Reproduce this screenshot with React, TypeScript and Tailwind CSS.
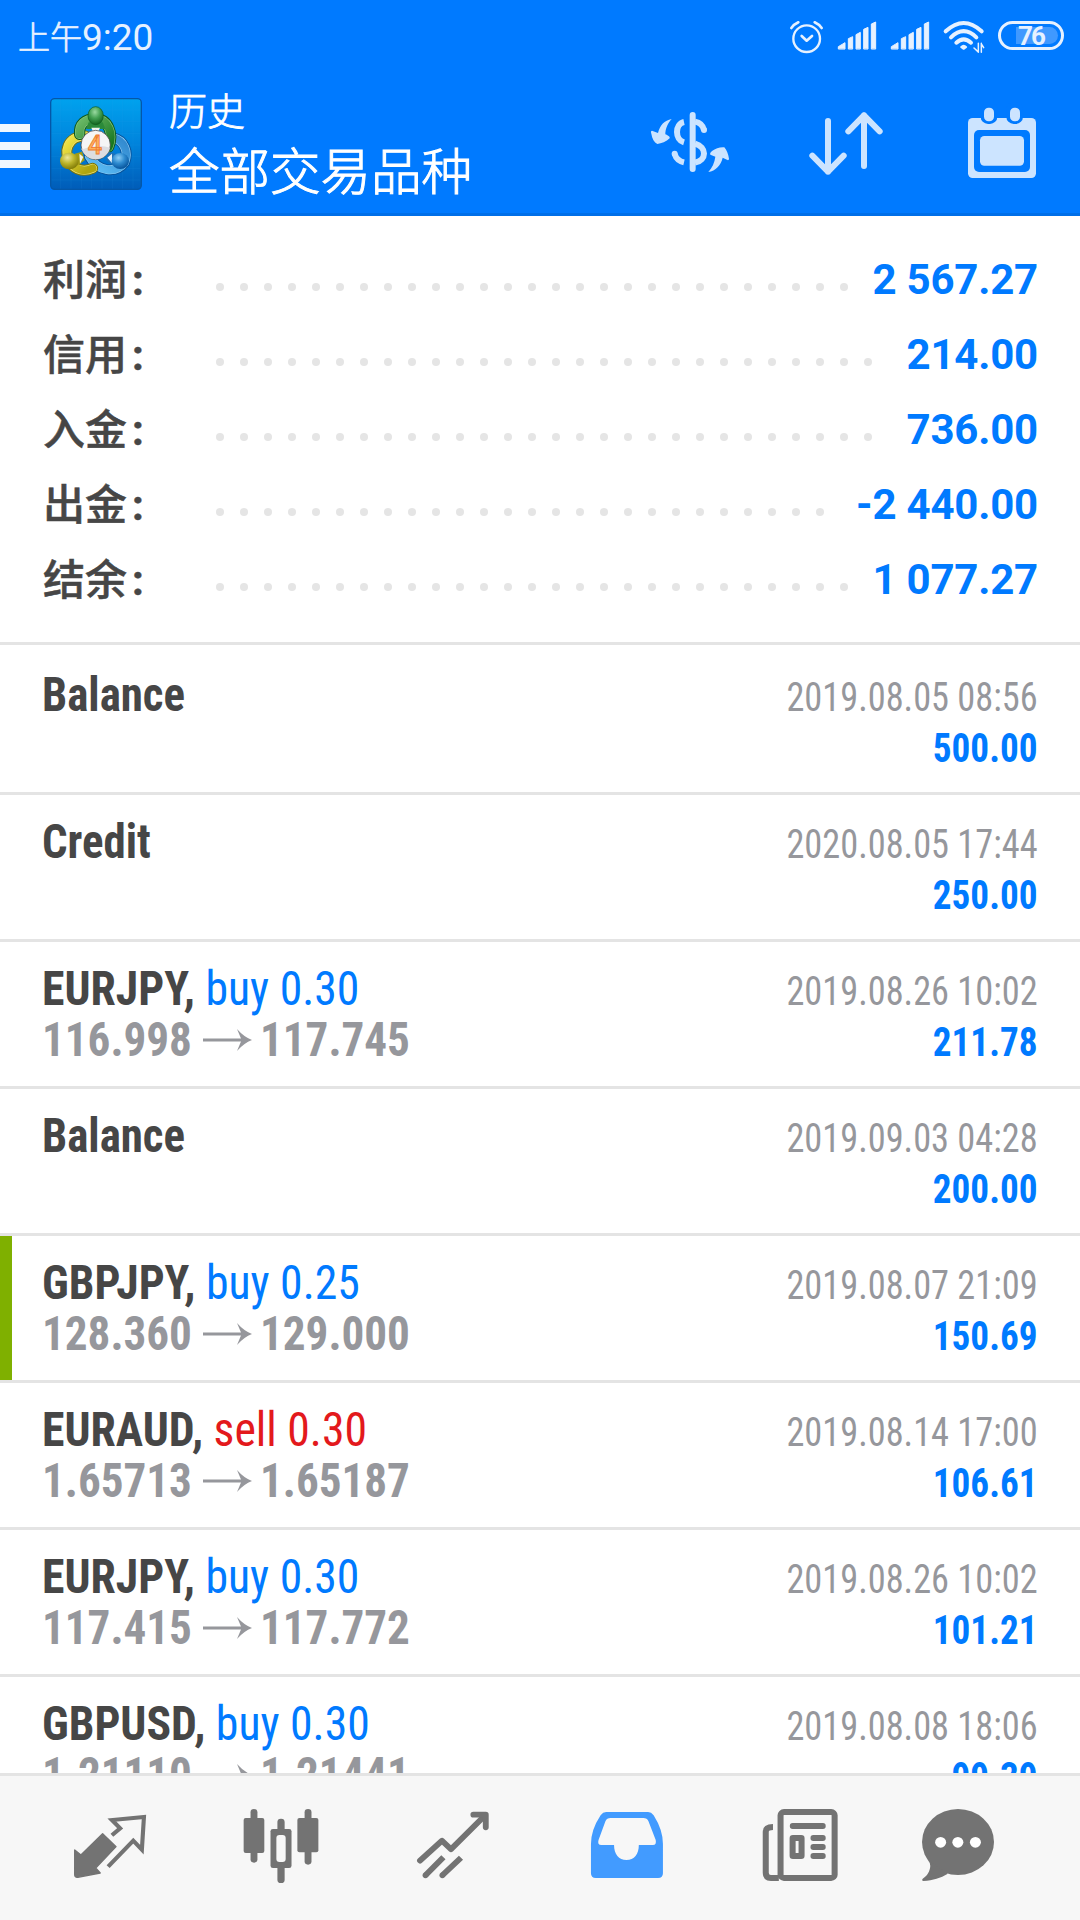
import type { ReactNode } from "react";

type Summary = { label: string; value: string; dots: number };
type Deal = {
  title: string;
  side?: "buy" | "sell";
  volume?: string;
  open?: string;
  close?: string;
  date: string;
  profit: string;
  marked?: boolean;
};

const summary: Summary[] = [
  { label: "利润", value: "2 567.27", dots: 27 },
  { label: "信用", value: "214.00", dots: 28 },
  { label: "入金", value: "736.00", dots: 28 },
  { label: "出金", value: "-2 440.00", dots: 26 },
  { label: "结余", value: "1 077.27", dots: 27 },
];

const deals: Deal[] = [
  { title: "Balance", date: "2019.08.05 08:56", profit: "500.00" },
  { title: "Credit", date: "2020.08.05 17:44", profit: "250.00" },
  { title: "EURJPY,", side: "buy", volume: "0.30", open: "116.998", close: "117.745", date: "2019.08.26 10:02", profit: "211.78" },
  { title: "Balance", date: "2019.09.03 04:28", profit: "200.00" },
  { title: "GBPJPY,", side: "buy", volume: "0.25", open: "128.360", close: "129.000", date: "2019.08.07 21:09", profit: "150.69", marked: true },
  { title: "EURAUD,", side: "sell", volume: "0.30", open: "1.65713", close: "1.65187", date: "2019.08.14 17:00", profit: "106.61" },
  { title: "EURJPY,", side: "buy", volume: "0.30", open: "117.415", close: "117.772", date: "2019.08.26 10:02", profit: "101.21" },
  { title: "GBPUSD,", side: "buy", volume: "0.30", open: "1.21110", close: "1.21441", date: "2019.08.08 18:06", profit: "99.39" },
];

function SignalBars({ x }: { x: number }) {
  return (
    <g transform={`translate(${x} 0)`} fill="#e6f1ff" stroke="#e6f1ff" strokeWidth="3" strokeLinejoin="round">
      <path d="M2 116V110L22 98V116Z" />
      <path d="M32 116V86L45 80V116Z" />
      <path d="M55 116V74L68 67V116Z" />
      <path d="M78 116V58L91 52V116Z" />
      <path d="M101 116V42L114 36V116Z" />
    </g>
  );
}

function StatusIcons() {
  return (
    <svg width="205" height="60" viewBox="255 0 615 180" fill="none" stroke="#e6f1ff" strokeLinecap="round" strokeLinejoin="round">
      <circle cx="320" cy="86" r="40" strokeWidth="7" />
      <path d="M305 78L320 92L336 78" strokeWidth="8" />
      <path d="M274 54Q282 43 295 37M344 37Q357 43 365 54" strokeWidth="8" />
      <SignalBars x={413} />
      <SignalBars x={572} />
      <path d="M737 64Q791 14 845 64" strokeWidth="12" />
      <path d="M753 82Q791 45 829 82" strokeWidth="12" />
      <path d="M769 98Q791 78 813 98" strokeWidth="12" />
      <path d="M783 111Q791 103 799 111L791 117Z" fill="#e6f1ff" strokeWidth="5" />
      <path d="M835 100V127M822 114L833 124M844 127V100M851 113L845 103" strokeWidth="4.5" />
    </svg>
  );
}

function AppLogo() {
  return (
    <svg width="140" height="120" viewBox="0 0 420 360" className="shrink-0">
      <defs>
        <linearGradient id="tile" x1="0" y1="0" x2="0" y2="1">
          <stop offset="0" stopColor="#00a2ee" />
          <stop offset="0.5" stopColor="#0083dc" />
          <stop offset="1" stopColor="#005cb8" />
        </linearGradient>
        <linearGradient id="greenRing" x1="0" y1="0" x2="1" y2="1">
          <stop offset="0" stopColor="#6dba68" />
          <stop offset="1" stopColor="#17761f" />
        </linearGradient>
        <linearGradient id="yellowRing" x1="0" y1="0" x2="0.8" y2="1">
          <stop offset="0" stopColor="#f6e94a" />
          <stop offset="1" stopColor="#b0a510" />
        </linearGradient>
        <linearGradient id="blueRing" x1="1" y1="0" x2="0" y2="1">
          <stop offset="0" stopColor="#2f86cc" />
          <stop offset="1" stopColor="#5fc0f8" />
        </linearGradient>
        <radialGradient id="greenHead" cx="0.45" cy="0.3" r="0.7">
          <stop offset="0" stopColor="#9ad9a0" />
          <stop offset="0.5" stopColor="#43a052" />
          <stop offset="1" stopColor="#12641f" />
        </radialGradient>
        <radialGradient id="yellowHead" cx="0.4" cy="0.3" r="0.7">
          <stop offset="0" stopColor="#eee79a" />
          <stop offset="0.5" stopColor="#bdb62c" />
          <stop offset="1" stopColor="#827c08" />
        </radialGradient>
        <radialGradient id="blueHead" cx="0.4" cy="0.3" r="0.7">
          <stop offset="0" stopColor="#8ccdf5" />
          <stop offset="0.5" stopColor="#2e8bd0" />
          <stop offset="1" stopColor="#07549c" />
        </radialGradient>
      </defs>
      <rect x="62" y="41" width="272" height="272" rx="12" fill="url(#tile)" stroke="#0457a8" strokeWidth="4" />
      <path d="M92 43V311M123 43V311M154 43V311M185 43V311M216 43V311M247 43V311M278 43V311M309 43V311M64 75H332M64 110H332M64 145H332M64 180H332M64 215H332M64 250H332M64 285H332" stroke="#35a5ee" strokeOpacity="0.15" strokeWidth="2" />
      <g fill="none" strokeLinecap="round">
        <path d="M248 158C284 166 296 202 284 232C258 266 204 262 178 214" stroke="#07549c" strokeWidth="33" />
        <path d="M248 158C284 166 296 202 284 232C258 266 204 262 178 214" stroke="#8fcdf5" strokeWidth="27" />
        <path d="M248 158C284 166 296 202 284 232C258 266 204 262 178 214" stroke="url(#blueRing)" strokeWidth="23" />
        <path d="M166 153C112 152 96 204 124 238C146 260 170 258 188 250" stroke="#7d7606" strokeWidth="33" />
        <path d="M166 153C112 152 96 204 124 238C146 260 170 258 188 250" stroke="#ece37a" strokeWidth="27" />
        <path d="M166 153C112 152 96 204 124 238C146 260 170 258 188 250" stroke="url(#yellowRing)" strokeWidth="23" />
        <path d="M149 148C146 118 164 102 197 102C234 102 252 146 236 186" stroke="#0d5a1c" strokeWidth="34" />
        <path d="M149 148C146 118 164 102 197 102C234 102 252 146 236 186" stroke="#83c47e" strokeWidth="28" />
        <path d="M149 148C146 118 164 102 197 102C234 102 252 146 236 186" stroke="url(#greenRing)" strokeWidth="24" />
      </g>
      <path d="M176 112H218L226 132H168Z" fill="#2b8a3a" />
      <path d="M184 128H210L204 142H190Z" fill="#f1f5ef" />
      <path d="M134 206L156 200L164 226L142 242Z" fill="#a39b12" />
      <path d="M256 206L236 200L228 226L250 242Z" fill="#1d70b8" />
      <path d="M148 206L160 216L150 236Z" fill="#f4f4e8" />
      <path d="M246 206L232 218L246 234Z" fill="#eaf3fa" />
      <ellipse cx="197" cy="92" rx="23" ry="27" fill="url(#greenHead)" stroke="#0d5a1c" strokeWidth="2" />
      <ellipse cx="118" cy="228" rx="28" ry="25" fill="url(#yellowHead)" />
      <ellipse cx="271" cy="228" rx="26" ry="24" fill="url(#blueHead)" />
      <circle cx="197" cy="180" r="44" fill="#f5f5f6" stroke="#3b3b3b" strokeOpacity="0.7" strokeWidth="3" />
      <path d="M154 188A44 44 0 0 0 240 188Q205 176 154 194Z" fill="#dcdde1" />
      <text x="195" y="207" textAnchor="middle" fontSize="76" fontWeight="500" fill="#ffb25c" stroke="#ee7a30" strokeWidth="2.5" className="font-['Roboto']">
        4
      </text>
    </svg>
  );
}

function CurrencyIcon() {
  return (
    <svg width="90" height="90" viewBox="15 0 270 270" fill="#cce4ff">
      <g fill="none" stroke="#cce4ff" strokeWidth="18">
        <path d="M132 66C104 72 104 119 132 127" />
        <path d="M104 162Q110 182 132 187" strokeLinecap="butt" />
        <path d="M158 45V207" strokeLinecap="round" />
        <path d="M165 65Q187 69 192 90" />
        <path d="M165 131C201 141 201 181 165 188" />
      </g>
      <circle cx="104" cy="161" r="9" />
      <circle cx="192" cy="90" r="9" />
      <path d="M95 57C73 61 60 76 54 99L36 92C31 93 33 97 34 101C36 116 43 127 52 132C64 131 79 125 89 115C90 111 88 108 76 103C76 86 84 68 95 57Z" />
      <path d="M205 216C216 204 224 188 226 170L211 164C209 160 212 157 216 153C227 145 239 141 253 142C260 149 265 163 267 176C267 180 264 182 261 179L248 173C243 195 227 213 205 216Z" />
    </svg>
  );
}

function SortIcon() {
  return (
    <svg width="90" height="90" viewBox="600 300 270 270" fill="none" stroke="#cce4ff" strokeWidth="18" strokeLinecap="round" strokeLinejoin="round">
      <path d="M684 363V515M637 467L684 515L731 467" />
      <path d="M792 498V346M745 394L792 346L839 394" />
    </svg>
  );
}

function CalendarIcon() {
  return (
    <svg width="90" height="90" viewBox="1080 300 270 270">
      <rect x="1104" y="354" width="204" height="180" rx="14" fill="#cce4ff" />
      <rect x="1122" y="390" width="168" height="126" rx="15" fill="#007aff" />
      <rect x="1140" y="408" width="132" height="89" rx="13" fill="#cce4ff" />
      <rect x="1142" y="306" width="50" height="66" rx="22" fill="#007aff" />
      <rect x="1219" y="306" width="50" height="66" rx="22" fill="#007aff" />
      <rect x="1152" y="323" width="30" height="41" rx="14" fill="#cce4ff" />
      <rect x="1230" y="323" width="30" height="41" rx="14" fill="#cce4ff" />
    </svg>
  );
}

function PriceArrow() {
  return (
    <svg width="49" height="24" viewBox="0 0 49 24" className="shrink-0">
      <path d="M0 10.5H38L34 1Q41 9 49 12Q41 15 34 23L38 13.5H0Z" fill="#96979c" />
    </svg>
  );
}

function NavIcon({ view, children }: { view: string; children: ReactNode }) {
  return (
    <svg width="80" height="84" viewBox={view} preserveAspectRatio="none" fill="none" strokeLinejoin="round">
      {children}
    </svg>
  );
}

function BottomNav() {
  return (
    <nav className="flex h-[147px] shrink-0 border-t-[3px] border-[#e4e4e4] bg-[#f7f7f7] pt-[30px] pl-[70px]">
      <NavIcon view="203.3 468 232.3 252">
        <path d="M217 600L235 615L298 551L337 590L278 654L291 669L226 682Q217 683 217 674Z" fill="#737373" stroke="#737373" strokeWidth="4" />
        <path d="M325 556L349 535L325 510L418 501L412 599L387 572L314 650" stroke="#737373" strokeWidth="12" strokeLinejoin="miter" />
      </NavIcon>
      <div className="ml-[91px]">
        <NavIcon view="701.3 468 232.3 252">
          <g fill="#737373">
            <rect x="729" y="477" width="20" height="161" rx="10" />
            <rect x="709" y="504" width="60" height="105" rx="6" />
            <rect x="807" y="506" width="21" height="193" rx="10" />
            <rect x="787" y="537" width="61" height="117" rx="7" />
            <rect x="886" y="477" width="20" height="167" rx="10" />
            <rect x="865" y="504" width="61" height="103" rx="6" />
          </g>
          <rect x="804" y="555" width="27" height="81" rx="9" fill="#f7f7f7" />
        </NavIcon>
      </div>
      <div className="ml-[92px]">
        <NavIcon view="1200.7 468 232.3 252">
          <g stroke="#737373" strokeWidth="17">
            <path d="M1221 632L1285 572L1311 598L1408 498" strokeLinecap="round" />
            <path d="M1376 494H1412V532" strokeLinecap="round" />
            <path d="M1237 676L1289 622M1286 676L1340 623" />
          </g>
          <circle cx="1237" cy="676" r="8.5" fill="#737373" />
          <circle cx="1286" cy="676" r="8.5" fill="#737373" />
        </NavIcon>
      </div>
      <div className="ml-[94px]">
        <NavIcon view="136.5 468 232.3 252">
          <path
            fill="#429bff"
            fillRule="evenodd"
            d="M192 486H314Q323 486 330 496Q357 540 357 582V670Q357 684 343 684H162Q148 684 148 670V582Q148 540 176 496Q183 486 192 486ZM205 504Q194 504 190 514L170 570Q166 585 178 585H215C215 612 229 630 251 630C274 630 287 612 287 585H328Q339 585 336 570L315 514Q311 504 300 504Z"
          />
        </NavIcon>
      </div>
      <div className="ml-[93px]">
        <NavIcon view="640.3 468 232.3 252">
          <g stroke="#737373" strokeWidth="17.5">
            <rect x="700" y="486" width="157" height="198" rx="10" />
            <path d="M678 531Q657 531 657 545V668Q657 684 672 684H695" />
            <rect x="735" y="564" width="26" height="54" rx="1" />
          </g>
          <g fill="#737373">
            <rect x="727" y="519" width="104" height="18" rx="8" />
            <rect x="787" y="555" width="44" height="18" rx="8" />
            <rect x="787" y="582" width="44" height="18" rx="8" />
            <rect x="787" y="609" width="44" height="18" rx="8" />
          </g>
        </NavIcon>
      </div>
      <div className="ml-[78px]">
        <NavIcon view="1097.3 468 232.3 252">
          <g fill="#737373">
            <ellipse cx="1213.5" cy="576" rx="104.5" ry="99" />
            <path d="M1126 630Q1133 638 1133 648C1132 664 1124 678 1111 686Q1107 691 1113 693C1142 691 1162 684 1184 671Z" />
          </g>
          <circle cx="1163" cy="577" r="16" fill="#fff" />
          <circle cx="1213" cy="577" r="16" fill="#fff" />
          <circle cx="1264" cy="577" r="16" fill="#fff" />
        </NavIcon>
      </div>
    </nav>
  );
}

function SummaryRow({ label, value, dots }: Summary) {
  return (
    <div className="flex h-[75px] items-center text-[42px] leading-[75px]">
      <div className="mt-px flex w-[173px] font-medium text-[#464646] [-webkit-text-stroke:0.5px_#464646]">
        <span>{label}</span>
        <span className="ml-[5px] font-['Roboto'] font-bold">:</span>
      </div>
      <div className="mt-[15px] flex gap-4">
        {Array.from({ length: dots }, (_, i) => (
          <i key={i} className="size-2 rounded-full bg-[#e5e5e5]" />
        ))}
      </div>
      <span className="ml-auto font-['Roboto'] font-bold tracking-[-0.2px] whitespace-pre text-[#007aff]">{value}</span>
    </div>
  );
}

function DealRow({ deal }: { deal: Deal }) {
  return (
    <div className="relative flex h-[147px] shrink-0 justify-between border-b-[3px] border-[#e4e4e4] pr-[42px] pl-[42px] font-['Roboto_Condensed']">
      {deal.marked && <div className="absolute inset-y-0 left-0 w-3 bg-[#7fb000]" />}
      <div className="pt-[21px] text-[48px] leading-[51px] whitespace-nowrap">
        {deal.side ? (
          <div className="origin-left scale-x-[0.952]">
            <span className="font-bold text-[#464646]">{deal.title}</span>
            {deal.side === "buy" && <span className="text-[#007aff]"> buy {deal.volume}</span>}
            {deal.side === "sell" && <span className="text-[#e3191c]"> sell {deal.volume}</span>}
          </div>
        ) : (
          <div className="origin-left scale-x-[0.935] font-bold text-[#464646]">{deal.title}</div>
        )}
        {deal.open && (
          <div className="flex items-center font-bold text-[#96979c]">
            <span className="w-[161px] origin-left scale-x-[0.94]">{deal.open}</span>
            <PriceArrow />
            <span className="ml-[8px] origin-left scale-x-[0.94]">{deal.close}</span>
          </div>
        )}
      </div>
      <div className="pt-6 text-right text-[40px] leading-[51px] whitespace-nowrap">
        <div className="origin-right scale-x-[0.908] text-[#96979c]">{deal.date}</div>
        <div className="origin-right scale-x-[0.93] font-bold text-[#007aff]">{deal.profit}</div>
      </div>
    </div>
  );
}

export default function App() {
  return (
    <div className="flex h-[1920px] w-[1080px] flex-col overflow-hidden bg-white font-['Roboto','Noto_Sans_CJK_SC',sans-serif]">
      <header className="flex h-[216px] shrink-0 flex-col border-b-[3px] border-[#006fe8] bg-[#007aff]">
        <div className="flex h-[74px] shrink-0 items-start pr-4 pl-[18px]">
          <div className="flex pt-[11px] leading-[54px] text-[#e6f1ff]">
            <span className="text-[32px] font-light [-webkit-text-stroke:0.7px_#e6f1ff]">上午</span>
            <span className="text-[37px] font-normal">9:20</span>
          </div>
          <div className="mt-[10px] ml-auto">
            <StatusIcons />
          </div>
          <div className="mt-[21px] ml-2 flex h-[29px] w-[66px] items-center rounded-full border-[3px] border-[#e6f1ff] pl-[15px]">
            <div className="flex h-[17px] w-[42px] items-center rounded-l-[3px] rounded-r-full bg-[#4099ff] pl-[2px] text-[26px] leading-none font-bold tracking-[-2px] text-[#e6f1ff]">
              76
            </div>
          </div>
        </div>
        <div className="flex">
          <div className="mt-[50px] flex w-[30px] flex-col gap-[10px]">
            <div className="h-2 bg-[#f0f7ff]" />
            <div className="h-2 bg-[#f0f7ff]" />
            <div className="h-2 bg-[#f0f7ff]" />
          </div>
          <div className="mt-[11px]">
            <AppLogo />
          </div>
          <div className="mt-[16px] -ml-px font-light text-white">
            <div className="text-[38px] leading-[44px] [-webkit-text-stroke:0.8px_white]">历史</div>
            <div className="mt-[9px] text-[50.5px] leading-[60px] [-webkit-text-stroke:1px_white]">全部交易品种</div>
          </div>
          <div className="mt-[26px] mr-[30px] ml-auto flex">
            <CurrencyIcon />
            <div className="ml-[65px]">
              <SortIcon />
            </div>
            <div className="ml-[70px]">
              <CalendarIcon />
            </div>
          </div>
        </div>
      </header>

      <section className="h-[429px] shrink-0 border-b-[3px] border-[#e4e4e4] pt-[26px] pr-[42px] pl-[43px]">
        {summary.map((s) => (
          <SummaryRow key={s.label} {...s} />
        ))}
      </section>

      <main className="flex min-h-0 flex-1 flex-col overflow-hidden pt-[3px]">
        {deals.map((d, i) => (
          <DealRow key={i} deal={d} />
        ))}
      </main>

      <BottomNav />
    </div>
  );
}
